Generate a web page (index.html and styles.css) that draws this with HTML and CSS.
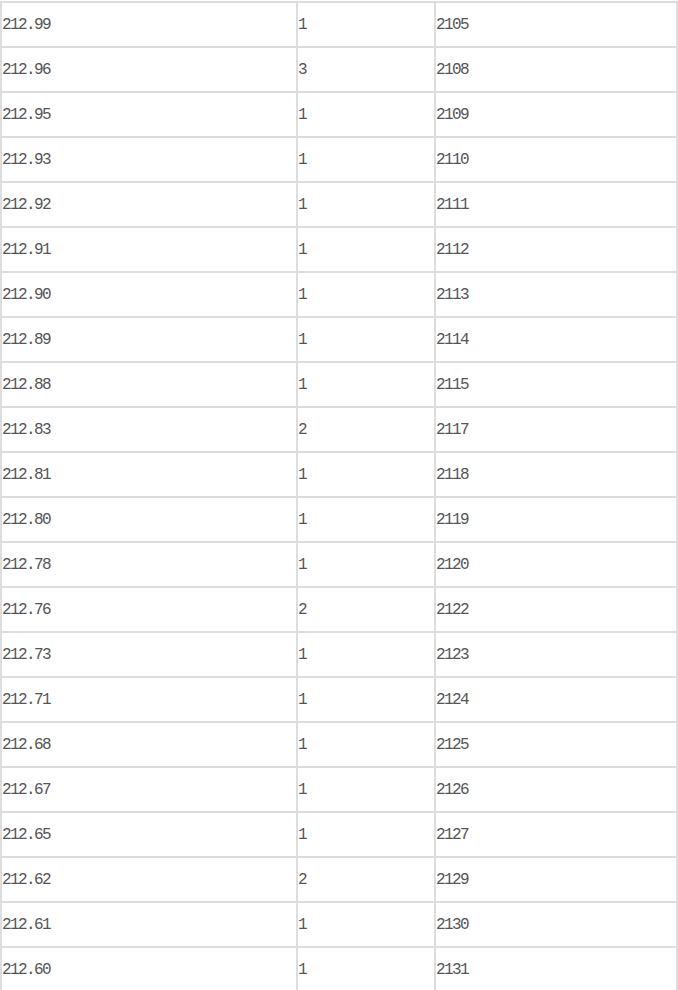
FILE: index.html
```html
<!DOCTYPE html>
<html lang="zh">
<head>
<meta charset="utf-8">
<title>价格表</title>
<link rel="stylesheet" href="styles.css">
</head>
<body>
<table class="price-table">
  <colgroup>
    <col class="col-price">
    <col class="col-qty">
    <col class="col-total">
  </colgroup>
  <tbody>
    <tr><td>212.99</td><td>1</td><td>2105</td></tr>
    <tr><td>212.96</td><td>3</td><td>2108</td></tr>
    <tr><td>212.95</td><td>1</td><td>2109</td></tr>
    <tr><td>212.93</td><td>1</td><td>2110</td></tr>
    <tr><td>212.92</td><td>1</td><td>2111</td></tr>
    <tr><td>212.91</td><td>1</td><td>2112</td></tr>
    <tr><td>212.90</td><td>1</td><td>2113</td></tr>
    <tr><td>212.89</td><td>1</td><td>2114</td></tr>
    <tr><td>212.88</td><td>1</td><td>2115</td></tr>
    <tr><td>212.83</td><td>2</td><td>2117</td></tr>
    <tr><td>212.81</td><td>1</td><td>2118</td></tr>
    <tr><td>212.80</td><td>1</td><td>2119</td></tr>
    <tr><td>212.78</td><td>1</td><td>2120</td></tr>
    <tr><td>212.76</td><td>2</td><td>2122</td></tr>
    <tr><td>212.73</td><td>1</td><td>2123</td></tr>
    <tr><td>212.71</td><td>1</td><td>2124</td></tr>
    <tr><td>212.68</td><td>1</td><td>2125</td></tr>
    <tr><td>212.67</td><td>1</td><td>2126</td></tr>
    <tr><td>212.65</td><td>1</td><td>2127</td></tr>
    <tr><td>212.62</td><td>2</td><td>2129</td></tr>
    <tr><td>212.61</td><td>1</td><td>2130</td></tr>
    <tr><td>212.60</td><td>1</td><td>2131</td></tr>
  </tbody>
</table>
</body>
</html>
```

FILE: styles.css
```css
html, body {
  margin: 0;
  padding: 0;
  background: #fff;
}

.price-table {
  margin-top: 1px;
  width: 678px;
  table-layout: fixed;
  border-collapse: separate;
  border-spacing: 0;
  border-right: 2px solid #dddddd;
  font-family: "Liberation Mono", "Noto Sans CJK SC", monospace;
  font-size: 16px;
  letter-spacing: -1.6px;
  color: #555555;
}

.col-price { width: 296px; }
.col-qty { width: 138px; }
.col-total { width: 242px; }

.price-table td {
  height: 43px;
  padding: 0;
  border-top: 2px solid #dddddd;
  border-left: 2px solid #dddddd;
  vertical-align: middle;
  text-align: left;
  white-space: nowrap;
  box-sizing: content-box;
}
```
